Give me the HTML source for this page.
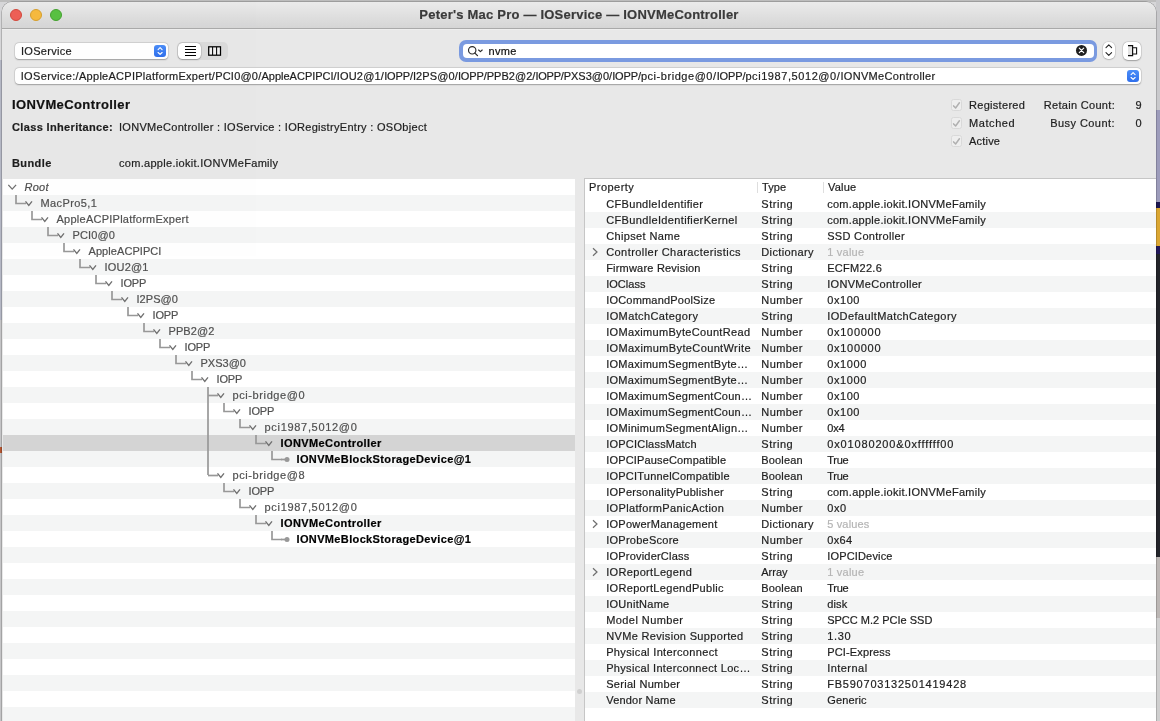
<!DOCTYPE html>
<html lang="en"><head><meta charset="utf-8"><title>IORegistryExplorer</title>
<style>
html,body{margin:0;padding:0}
body{width:1160px;height:721px;overflow:hidden;position:relative;background:#d6d6d8;
 font-family:"Liberation Sans",sans-serif;font-size:11px;color:#1e1e1e;letter-spacing:.3px;-webkit-text-stroke:.2px;-webkit-font-smoothing:antialiased}
.bg{position:absolute}
.win{opacity:.999;will-change:opacity;position:absolute;left:2px;top:2px;width:1154px;height:730px;background:#e8e8e8;border-radius:10px 10px 0 0;
 box-shadow:0 0 0 0.5px rgba(0,0,0,.35);overflow:hidden}
.tbar{position:absolute;left:0;top:0;width:100%;height:26px;background:linear-gradient(#ebebeb,#d5d5d5);border-bottom:1px solid #a9a9a9;box-shadow:0 1px 0 #eeeeee}
.tl{position:absolute;top:7px;width:12px;height:12px;border-radius:50%;box-sizing:border-box}
.tl.r{left:8px;background:#ee5f56;border:.5px solid #d1483c}
.tl.y{left:28px;background:#f6b93e;border:.5px solid #d69e2e}
.tl.g{left:48px;background:#58c042;border:.5px solid #44a02f}
.title{position:absolute;left:0;top:5px;width:100%;text-align:center;font-weight:bold;font-size:13px;color:#3a3a3a;letter-spacing:.215px}
.abs{position:absolute}
.field{position:absolute;background:#fff;border-radius:4px;box-shadow:0 0 0 .5px rgba(0,0,0,.12),0 .5px 1.5px rgba(0,0,0,.28);box-sizing:border-box}
.blue{position:absolute;width:12px;height:12px;border-radius:3px;background:linear-gradient(#4b8df8,#2f6fec)}
.lbl{position:absolute;white-space:nowrap}
.b{font-weight:bold}
/* tree */
.tree{position:absolute;left:1px;top:177px;width:572px;height:560px;background:#fff;overflow:hidden}
.tr{position:relative;height:16px;width:100%}
.tr.alt{background:#f4f5f5}
.tr.sel{background:#d4d4d4}
.t{position:absolute;top:0;line-height:16px;font-size:11px;color:#505050;white-space:nowrap}
.t.it{font-style:italic}
.t.bd{font-weight:bold;color:#000}
.conn{position:absolute;left:0;top:0}
.grip{position:absolute;left:574.5px;top:686.5px;width:5px;height:5px;border-radius:50%;background:#d0d0d0}
/* props */
.props{position:absolute;left:582px;top:176px;width:573px;height:560px;background:#fff;border:1px solid #c6c6c6;border-right:none;overflow:hidden;box-sizing:content-box}
.ph{position:relative;height:17px;line-height:17px}
.ph span{position:absolute;top:0;color:#1e1e1e}
.ph .h1{left:4px}.ph .h2{left:177px}.ph .h3{left:243px}
.ph .sep{position:absolute;top:3px;width:1px;height:11px;background:#dedede}
.pr{position:relative;height:16px;line-height:16px;white-space:nowrap}
.pr.alt{background:#f4f5f5}
.pr span{position:absolute;top:0}
.c1{left:21.2px}.c2{left:176.3px}.c3{left:242.2px}
.dim{color:#b5b5b5}
.dz{position:absolute;left:5.5px;top:3px}

</style></head>
<body>
<div class="bg" style="left:0;top:0;width:1160px;height:2px;background:#bdbdbd"></div>
<div class="bg" style="left:1156px;top:0;width:4px;height:721px;background:#c9c9cc"></div>
<div class="bg" style="left:1156px;top:110px;width:4px;height:92px;background:#9d9cbb"></div>
<div class="bg" style="left:1156px;top:202px;width:4px;height:6px;background:#1c1650"></div>
<div class="bg" style="left:1156px;top:208px;width:4px;height:38px;background:#dba733"></div>
<div class="bg" style="left:1156px;top:246px;width:4px;height:8px;background:#22185a"></div>
<div class="bg" style="left:1156px;top:254px;width:4px;height:303px;background:#23242a"></div>
<div class="bg" style="left:1156px;top:557px;width:4px;height:61px;background:#bcb7b5"></div>
<div class="bg" style="left:1156px;top:618px;width:4px;height:103px;background:#cfcfcf"></div>
<div class="bg" style="left:0;top:60px;width:2px;height:260px;background:#b4b7c4"></div>
<div class="bg" style="left:0;top:320px;width:2px;height:401px;background:#c4c4c6"></div>
<div class="bg" style="left:0;top:447px;width:2px;height:6px;background:#b5552f"></div>
<div class="win">
<div class="tbar">
 <i class="tl r"></i><i class="tl y"></i><i class="tl g"></i>
 <div class="title">Peter's Mac Pro — IOService — IONVMeController</div>
</div>
<!-- toolbar -->
<div class="field" style="left:13px;top:41px;width:153px;height:16px"></div>
<span class="lbl" style="left:19px;top:42px;line-height:15px">IOService</span>
<div class="blue" style="left:152px;top:43px"><svg width="12" height="12" viewBox="0 0 12 12"><path d="M4.1 4.6 L6.1 2.7 L8.1 4.6 M4.1 7.5 L6.1 9.4 L8.1 7.5" fill="none" stroke="#fff" stroke-width="1.15" stroke-linecap="round" stroke-linejoin="round"/></svg></div>
<!-- segmented -->
<div class="abs" style="left:175px;top:40px;width:51px;height:18px;border-radius:5px;background:#dbdbdb"></div>
<div class="field" style="left:176px;top:41px;width:23.3px;height:16px;border-radius:4.5px"></div>
<svg class="abs" style="left:175px;top:40px" width="51" height="18" viewBox="0 0 51 18">
 <path d="M8 4.5 H19 M8 7.5 H19 M8 10.5 H19 M8 13.5 H19" stroke="#000" stroke-width="1.2" fill="none"/>
 <rect x="31.7" y="4.8" width="11.8" height="8.4" fill="#f2f2f2" stroke="#000" stroke-width="1.25"/>
 <path d="M35.6 5 V13 M39.6 5 V13" stroke="#000" stroke-width="1.05"/>
</svg>
<!-- search -->
<div class="abs" style="left:457px;top:38px;width:638px;height:22px;border-radius:7px;background:#7a9ae0"></div>
<div class="abs" style="left:460.5px;top:41.5px;width:631px;height:14.4px;border-radius:4px;background:#fff"></div>
<svg class="abs" style="left:464px;top:42px" width="20" height="14" viewBox="0 0 20 14">
 <circle cx="6.2" cy="6.3" r="3.7" fill="none" stroke="#2a2a2a" stroke-width="1.15"/>
 <path d="M8.9 9.1 L11.5 11.6" stroke="#2a2a2a" stroke-width="1.3" stroke-linecap="round"/>
 <path d="M12.6 6.0 L14.4 7.7 L16.2 6.0" fill="none" stroke="#2a2a2a" stroke-width="1.15" stroke-linecap="round" stroke-linejoin="round"/>
</svg>
<span class="lbl" style="left:486.5px;top:41.8px;line-height:15px;letter-spacing:.33px;color:#111">nvme</span>
<svg class="abs" style="left:1073px;top:42px" width="13" height="13" viewBox="0 0 13 13">
 <circle cx="6.5" cy="6.4" r="5.5" fill="#1f1f1f"/>
 <path d="M4.3 4.2 L8.7 8.6 M8.7 4.2 L4.3 8.6" stroke="#fff" stroke-width="1.2" stroke-linecap="round"/>
</svg>
<!-- stepper -->
<div class="field" style="left:1101px;top:40px;width:11.5px;height:16.5px;border-radius:5px"></div>
<svg class="abs" style="left:1101px;top:40px" width="12" height="17" viewBox="0 0 12 17">
 <path d="M3 5.6 L5.8 2.9 L8.6 5.6 M3 10.6 L5.8 13.3 L8.6 10.6" fill="none" stroke="#222" stroke-width="1.1" stroke-linecap="round" stroke-linejoin="round"/>
</svg>
<!-- panel button -->
<div class="field" style="left:1121px;top:40px;width:18px;height:18px;border-radius:5px"></div>
<svg class="abs" style="left:1121px;top:40px" width="18" height="18" viewBox="0 0 18 18">
 <rect x="5" y="3.6" width="4.4" height="10" fill="#e4e4e4"/>
 <path d="M5 3.6 H9.6 V13.7 H5" fill="none" stroke="#111" stroke-width="1.2"/>
 <path d="M9.6 5.7 H13.6 V12 H9.6" fill="none" stroke="#111" stroke-width="1.1"/>
</svg>
<!-- path -->
<div class="field" style="left:13px;top:66px;width:1126px;height:16px"></div>
<div class="lbl" style="left:0;top:66px;line-height:16px;letter-spacing:0"><span style="position:absolute;left:18.65px;letter-spacing:0.359px">IOService:/</span><span style="position:absolute;left:77.00px;letter-spacing:0.272px">AppleACPIPlatformExpert/</span><span style="position:absolute;left:213.15px;letter-spacing:0.222px">PCI0@0/</span><span style="position:absolute;left:259.50px;letter-spacing:-0.004px">AppleACPIPCI/</span><span style="position:absolute;left:334.65px;letter-spacing:0.212px">IOU2@1/</span><span style="position:absolute;left:382.15px;letter-spacing:-0.119px">IOPP/</span><span style="position:absolute;left:410.90px;letter-spacing:0.114px">I2PS@0/</span><span style="position:absolute;left:455.90px;letter-spacing:-0.119px">IOPP/</span><span style="position:absolute;left:484.65px;letter-spacing:0.040px">PPB2@2/</span><span style="position:absolute;left:533.40px;letter-spacing:-0.219px">IOPP/</span><span style="position:absolute;left:561.65px;letter-spacing:0.004px">PXS3@0/</span><span style="position:absolute;left:610.15px;letter-spacing:-0.119px">IOPP/</span><span style="position:absolute;left:638.90px;letter-spacing:0.546px">pci-bridge@0/</span><span style="position:absolute;left:714.65px;letter-spacing:-0.119px">IOPP/</span><span style="position:absolute;left:743.40px;letter-spacing:0.573px">pci1987,5012@0/</span><span style="position:absolute;left:838.40px;letter-spacing:0.324px">IONVMeController</span></div>
<div class="blue" style="left:1125px;top:68px"><svg width="12" height="12" viewBox="0 0 12 12"><path d="M4.1 4.6 L6.1 2.7 L8.1 4.6 M4.1 7.5 L6.1 9.4 L8.1 7.5" fill="none" stroke="#fff" stroke-width="1.15" stroke-linecap="round" stroke-linejoin="round"/></svg></div>
<!-- info -->
<span class="lbl b" style="left:10px;top:95.2px;font-size:13px;line-height:16px;color:#111;letter-spacing:.4px">IONVMeController</span>
<span class="lbl b" style="left:10px;top:118px;line-height:14px;letter-spacing:.35px">Class Inheritance:</span>
<span class="lbl" style="left:117px;top:118px;line-height:14px">IONVMeController : IOService : IORegistryEntry : OSObject</span>
<span class="lbl b" style="left:10px;top:154px;line-height:14px;letter-spacing:.4px">Bundle</span>
<span class="lbl" style="left:117px;top:154px;line-height:14px">com.apple.iokit.IONVMeFamily</span>
<!-- checks -->
<div class="abs" style="left:949px;top:97px;width:10.6px;height:11.6px;box-sizing:border-box;border:1px solid #d9d9d9;border-radius:2.5px;background:#eeeeee"></div>
<svg class="abs" style="left:949px;top:97.7px" width="11" height="11" viewBox="0 0 11 11"><path d="M2.6 5.9 L4.6 8 L8.4 2.8" fill="none" stroke="#b0b0b0" stroke-width="1.5" stroke-linecap="round" stroke-linejoin="round"/></svg>
<span class="lbl" style="left:967px;top:96px;line-height:14px">Registered</span>
<div class="abs" style="left:949px;top:115px;width:10.6px;height:11.6px;box-sizing:border-box;border:1px solid #d9d9d9;border-radius:2.5px;background:#eeeeee"></div>
<svg class="abs" style="left:949px;top:115.7px" width="11" height="11" viewBox="0 0 11 11"><path d="M2.6 5.9 L4.6 8 L8.4 2.8" fill="none" stroke="#b0b0b0" stroke-width="1.5" stroke-linecap="round" stroke-linejoin="round"/></svg>
<span class="lbl" style="left:967px;top:114px;line-height:14px;letter-spacing:.58px">Matched</span>
<div class="abs" style="left:949px;top:133px;width:10.6px;height:11.6px;box-sizing:border-box;border:1px solid #d9d9d9;border-radius:2.5px;background:#eeeeee"></div>
<svg class="abs" style="left:949px;top:133.7px" width="11" height="11" viewBox="0 0 11 11"><path d="M2.6 5.9 L4.6 8 L8.4 2.8" fill="none" stroke="#b0b0b0" stroke-width="1.5" stroke-linecap="round" stroke-linejoin="round"/></svg>
<span class="lbl" style="left:967px;top:132px;line-height:14px;letter-spacing:.2px">Active</span>
<span class="lbl" style="right:41px;top:96px;line-height:14px">Retain Count:</span>
<span class="lbl" style="right:14px;top:96px;line-height:14px">9</span>
<span class="lbl" style="right:41px;top:114px;line-height:14px;letter-spacing:.45px">Busy Count:</span>
<span class="lbl" style="right:14px;top:114px;line-height:14px">0</span>
<div class="tree">
<div class="tr"><span class="t it" style="left:21.5px;letter-spacing:0.25px">Root</span></div>
<div class="tr alt"><span class="t" style="left:37.5px;letter-spacing:0.406px">MacPro5,1</span></div>
<div class="tr"><span class="t" style="left:53.5px;letter-spacing:0.25px">AppleACPIPlatformExpert</span></div>
<div class="tr alt"><span class="t" style="left:69.5px;letter-spacing:0.15px">PCI0@0</span></div>
<div class="tr"><span class="t" style="left:85.5px;letter-spacing:0.068px">AppleACPIPCI</span></div>
<div class="tr alt"><span class="t" style="left:101.5px;letter-spacing:0.2px">IOU2@1</span></div>
<div class="tr"><span class="t" style="left:117.5px;letter-spacing:-0.167px">IOPP</span></div>
<div class="tr alt"><span class="t" style="left:133.5px;letter-spacing:0.05px">I2PS@0</span></div>
<div class="tr"><span class="t" style="left:149.5px;letter-spacing:-0.167px">IOPP</span></div>
<div class="tr alt"><span class="t" style="left:165.5px;letter-spacing:0.1px">PPB2@2</span></div>
<div class="tr"><span class="t" style="left:181.5px;letter-spacing:-0.167px">IOPP</span></div>
<div class="tr alt"><span class="t" style="left:197.5px;letter-spacing:0.0px">PXS3@0</span></div>
<div class="tr"><span class="t" style="left:213.5px;letter-spacing:-0.167px">IOPP</span></div>
<div class="tr alt"><span class="t" style="left:229.5px;letter-spacing:0.6px">pci-bridge@0</span></div>
<div class="tr"><span class="t" style="left:245.5px;letter-spacing:-0.167px">IOPP</span></div>
<div class="tr alt"><span class="t" style="left:261.5px;letter-spacing:0.692px">pci1987,5012@0</span></div>
<div class="tr sel"><span class="t bd" style="left:277.5px;letter-spacing:0.4px">IONVMeController</span></div>
<div class="tr alt"><span class="t bd" style="left:293.5px;letter-spacing:0.36px">IONVMeBlockStorageDevice@1</span></div>
<div class="tr"><span class="t" style="left:229.5px;letter-spacing:0.6px">pci-bridge@8</span></div>
<div class="tr alt"><span class="t" style="left:245.5px;letter-spacing:-0.167px">IOPP</span></div>
<div class="tr"><span class="t" style="left:261.5px;letter-spacing:0.692px">pci1987,5012@0</span></div>
<div class="tr alt"><span class="t bd" style="left:277.5px;letter-spacing:0.4px">IONVMeController</span></div>
<div class="tr"><span class="t bd" style="left:293.5px;letter-spacing:0.36px">IONVMeBlockStorageDevice@1</span></div>
<div class="tr alt"></div>
<div class="tr"></div>
<div class="tr alt"></div>
<div class="tr"></div>
<div class="tr alt"></div>
<div class="tr"></div>
<div class="tr alt"></div>
<div class="tr"></div>
<div class="tr alt"></div>
<div class="tr"></div>
<div class="tr alt"></div>
<svg class="conn" width="573" height="542" viewBox="0 0 573 542">
<path d="M5.3 5.9 L9.2 10.1 L13.1 5.9" fill="none" stroke="#707070" stroke-width="1.35"/>
<path d="M13 16 V24.5 H23" fill="none" stroke="#989898" stroke-width="1.7"/>
<path d="M22.5 22.4 L25.8 26.4 L29 22.4" fill="none" stroke="#707070" stroke-width="1.35"/>
<path d="M29 32 V40.5 H39" fill="none" stroke="#989898" stroke-width="1.7"/>
<path d="M38.5 38.4 L41.8 42.4 L45 38.4" fill="none" stroke="#707070" stroke-width="1.35"/>
<path d="M45 48 V56.5 H55" fill="none" stroke="#989898" stroke-width="1.7"/>
<path d="M54.5 54.4 L57.8 58.4 L61 54.4" fill="none" stroke="#707070" stroke-width="1.35"/>
<path d="M61 64 V72.5 H71" fill="none" stroke="#989898" stroke-width="1.7"/>
<path d="M70.5 70.4 L73.8 74.4 L77 70.4" fill="none" stroke="#707070" stroke-width="1.35"/>
<path d="M77 80 V88.5 H87" fill="none" stroke="#989898" stroke-width="1.7"/>
<path d="M86.5 86.4 L89.8 90.4 L93 86.4" fill="none" stroke="#707070" stroke-width="1.35"/>
<path d="M93 96 V104.5 H103" fill="none" stroke="#989898" stroke-width="1.7"/>
<path d="M102.5 102.4 L105.8 106.4 L109 102.4" fill="none" stroke="#707070" stroke-width="1.35"/>
<path d="M109 112 V120.5 H119" fill="none" stroke="#989898" stroke-width="1.7"/>
<path d="M118.5 118.4 L121.8 122.4 L125 118.4" fill="none" stroke="#707070" stroke-width="1.35"/>
<path d="M125 128 V136.5 H135" fill="none" stroke="#989898" stroke-width="1.7"/>
<path d="M134.5 134.4 L137.8 138.4 L141 134.4" fill="none" stroke="#707070" stroke-width="1.35"/>
<path d="M141 144 V152.5 H151" fill="none" stroke="#989898" stroke-width="1.7"/>
<path d="M150.5 150.4 L153.8 154.4 L157 150.4" fill="none" stroke="#707070" stroke-width="1.35"/>
<path d="M157 160 V168.5 H167" fill="none" stroke="#989898" stroke-width="1.7"/>
<path d="M166.5 166.4 L169.8 170.4 L173 166.4" fill="none" stroke="#707070" stroke-width="1.35"/>
<path d="M173 176 V184.5 H183" fill="none" stroke="#989898" stroke-width="1.7"/>
<path d="M182.5 182.4 L185.8 186.4 L189 182.4" fill="none" stroke="#707070" stroke-width="1.35"/>
<path d="M189 192 V200.5 H199" fill="none" stroke="#989898" stroke-width="1.7"/>
<path d="M198.5 198.4 L201.8 202.4 L205 198.4" fill="none" stroke="#707070" stroke-width="1.35"/>
<path d="M205 208 V296" fill="none" stroke="#989898" stroke-width="1.7"/>
<path d="M205 216.5 H215" fill="none" stroke="#989898" stroke-width="1.7"/>
<path d="M214.5 214.4 L217.8 218.4 L221 214.4" fill="none" stroke="#707070" stroke-width="1.35"/>
<path d="M221 224 V232.5 H231" fill="none" stroke="#989898" stroke-width="1.7"/>
<path d="M230.5 230.4 L233.8 234.4 L237 230.4" fill="none" stroke="#707070" stroke-width="1.35"/>
<path d="M237 240 V248.5 H247" fill="none" stroke="#989898" stroke-width="1.7"/>
<path d="M246.5 246.4 L249.8 250.4 L253 246.4" fill="none" stroke="#707070" stroke-width="1.35"/>
<path d="M253 256 V264.5 H263" fill="none" stroke="#989898" stroke-width="1.7"/>
<path d="M262.5 262.4 L265.8 266.4 L269 262.4" fill="none" stroke="#707070" stroke-width="1.35"/>
<path d="M269 272 V280.5 H279" fill="none" stroke="#989898" stroke-width="1.7"/>
<circle cx="284" cy="280.5" r="2.5" fill="#989898"/><path d="M278 280.5 H283" stroke="#989898" stroke-width="1.7"/>
<path d="M205 296.5 H215" fill="none" stroke="#989898" stroke-width="1.7"/>
<path d="M214.5 294.4 L217.8 298.4 L221 294.4" fill="none" stroke="#707070" stroke-width="1.35"/>
<path d="M221 304 V312.5 H231" fill="none" stroke="#989898" stroke-width="1.7"/>
<path d="M230.5 310.4 L233.8 314.4 L237 310.4" fill="none" stroke="#707070" stroke-width="1.35"/>
<path d="M237 320 V328.5 H247" fill="none" stroke="#989898" stroke-width="1.7"/>
<path d="M246.5 326.4 L249.8 330.4 L253 326.4" fill="none" stroke="#707070" stroke-width="1.35"/>
<path d="M253 336 V344.5 H263" fill="none" stroke="#989898" stroke-width="1.7"/>
<path d="M262.5 342.4 L265.8 346.4 L269 342.4" fill="none" stroke="#707070" stroke-width="1.35"/>
<path d="M269 352 V360.5 H279" fill="none" stroke="#989898" stroke-width="1.7"/>
<circle cx="284" cy="360.5" r="2.5" fill="#989898"/><path d="M278 360.5 H283" stroke="#989898" stroke-width="1.7"/>
</svg>
</div>
<div class="grip"></div>
<div class="props">
<div class="ph"><span class="h1" style="letter-spacing:.46px">Property</span><i class="sep" style="left:172px"></i><span class="h2" style="letter-spacing:.13px">Type</span><i class="sep" style="left:238px"></i><span class="h3" style="letter-spacing:.19px">Value</span></div>
<div class="pr"><span class="c1" style="letter-spacing:0.335px">CFBundleIdentifier</span><span class="c2" style="letter-spacing:0.54px">String</span><span class="c3" style="letter-spacing:0.278px">com.apple.iokit.IONVMeFamily</span></div>
<div class="pr alt"><span class="c1" style="letter-spacing:0.352px">CFBundleIdentifierKernel</span><span class="c2" style="letter-spacing:0.54px">String</span><span class="c3" style="letter-spacing:0.278px">com.apple.iokit.IONVMeFamily</span></div>
<div class="pr"><span class="c1" style="letter-spacing:0.355px">Chipset Name</span><span class="c2" style="letter-spacing:0.54px">String</span><span class="c3" style="letter-spacing:0.315px">SSD Controller</span></div>
<div class="pr alt"><svg class="dz" width="8" height="10" viewBox="0 0 8 10"><path d="M2 1.2 L6 5 L2 8.8" fill="none" stroke="#6e6e6e" stroke-width="1.2"/></svg><span class="c1" style="letter-spacing:0.436px">Controller Characteristics</span><span class="c2" style="letter-spacing:0.378px">Dictionary</span><span class="c3 dim" style="letter-spacing:0.233px">1 value</span></div>
<div class="pr"><span class="c1" style="letter-spacing:0.2px">Firmware Revision</span><span class="c2" style="letter-spacing:0.54px">String</span><span class="c3" style="letter-spacing:0.286px">ECFM22.6</span></div>
<div class="pr alt"><span class="c1" style="letter-spacing:0.017px">IOClass</span><span class="c2" style="letter-spacing:0.54px">String</span><span class="c3" style="letter-spacing:0.313px">IONVMeController</span></div>
<div class="pr"><span class="c1" style="letter-spacing:0.194px">IOCommandPoolSize</span><span class="c2" style="letter-spacing:0.4px">Number</span><span class="c3" style="letter-spacing:0.575px">0x100</span></div>
<div class="pr alt"><span class="c1" style="letter-spacing:0.393px">IOMatchCategory</span><span class="c2" style="letter-spacing:0.54px">String</span><span class="c3" style="letter-spacing:0.39px">IODefaultMatchCategory</span></div>
<div class="pr"><span class="c1" style="letter-spacing:0.329px">IOMaximumByteCountRead</span><span class="c2" style="letter-spacing:0.4px">Number</span><span class="c3" style="letter-spacing:0.714px">0x100000</span></div>
<div class="pr alt"><span class="c1" style="letter-spacing:0.373px">IOMaximumByteCountWrite</span><span class="c2" style="letter-spacing:0.4px">Number</span><span class="c3" style="letter-spacing:0.714px">0x100000</span></div>
<div class="pr"><span class="c1" style="letter-spacing:0.27px">IOMaximumSegmentByte…</span><span class="c2" style="letter-spacing:0.4px">Number</span><span class="c3" style="letter-spacing:0.64px">0x1000</span></div>
<div class="pr alt"><span class="c1" style="letter-spacing:0.27px">IOMaximumSegmentByte…</span><span class="c2" style="letter-spacing:0.4px">Number</span><span class="c3" style="letter-spacing:0.64px">0x1000</span></div>
<div class="pr"><span class="c1" style="letter-spacing:0.26px">IOMaximumSegmentCoun…</span><span class="c2" style="letter-spacing:0.4px">Number</span><span class="c3" style="letter-spacing:0.575px">0x100</span></div>
<div class="pr alt"><span class="c1" style="letter-spacing:0.26px">IOMaximumSegmentCoun…</span><span class="c2" style="letter-spacing:0.4px">Number</span><span class="c3" style="letter-spacing:0.575px">0x100</span></div>
<div class="pr"><span class="c1" style="letter-spacing:0.305px">IOMinimumSegmentAlign…</span><span class="c2" style="letter-spacing:0.4px">Number</span><span class="c3" style="letter-spacing:-0.1px">0x4</span></div>
<div class="pr alt"><span class="c1" style="letter-spacing:0.221px">IOPCIClassMatch</span><span class="c2" style="letter-spacing:0.54px">String</span><span class="c3" style="letter-spacing:0.855px">0x01080200&amp;0xffffff00</span></div>
<div class="pr"><span class="c1" style="letter-spacing:0.163px">IOPCIPauseCompatible</span><span class="c2" style="letter-spacing:0.167px">Boolean</span><span class="c3" style="letter-spacing:-0.267px">True</span></div>
<div class="pr alt"><span class="c1" style="letter-spacing:0.225px">IOPCITunnelCompatible</span><span class="c2" style="letter-spacing:0.167px">Boolean</span><span class="c3" style="letter-spacing:-0.267px">True</span></div>
<div class="pr"><span class="c1" style="letter-spacing:0.271px">IOPersonalityPublisher</span><span class="c2" style="letter-spacing:0.54px">String</span><span class="c3" style="letter-spacing:0.278px">com.apple.iokit.IONVMeFamily</span></div>
<div class="pr alt"><span class="c1" style="letter-spacing:0.35px">IOPlatformPanicAction</span><span class="c2" style="letter-spacing:0.4px">Number</span><span class="c3" style="letter-spacing:0.6px">0x0</span></div>
<div class="pr"><svg class="dz" width="8" height="10" viewBox="0 0 8 10"><path d="M2 1.2 L6 5 L2 8.8" fill="none" stroke="#6e6e6e" stroke-width="1.2"/></svg><span class="c1" style="letter-spacing:0.256px">IOPowerManagement</span><span class="c2" style="letter-spacing:0.378px">Dictionary</span><span class="c3 dim" style="letter-spacing:0.171px">5 values</span></div>
<div class="pr alt"><span class="c1" style="letter-spacing:0.255px">IOProbeScore</span><span class="c2" style="letter-spacing:0.4px">Number</span><span class="c3" style="letter-spacing:0.367px">0x64</span></div>
<div class="pr"><span class="c1" style="letter-spacing:0.207px">IOProviderClass</span><span class="c2" style="letter-spacing:0.54px">String</span><span class="c3" style="letter-spacing:0.17px">IOPCIDevice</span></div>
<div class="pr alt"><svg class="dz" width="8" height="10" viewBox="0 0 8 10"><path d="M2 1.2 L6 5 L2 8.8" fill="none" stroke="#6e6e6e" stroke-width="1.2"/></svg><span class="c1" style="letter-spacing:0.331px">IOReportLegend</span><span class="c2" style="letter-spacing:-0.025px">Array</span><span class="c3 dim" style="letter-spacing:0.233px">1 value</span></div>
<div class="pr"><span class="c1" style="letter-spacing:0.316px">IOReportLegendPublic</span><span class="c2" style="letter-spacing:0.167px">Boolean</span><span class="c3" style="letter-spacing:-0.267px">True</span></div>
<div class="pr alt"><span class="c1" style="letter-spacing:0.278px">IOUnitName</span><span class="c2" style="letter-spacing:0.54px">String</span><span class="c3" style="letter-spacing:0.167px">disk</span></div>
<div class="pr"><span class="c1" style="letter-spacing:0.427px">Model Number</span><span class="c2" style="letter-spacing:0.54px">String</span><span class="c3" style="letter-spacing:0.0px">SPCC M.2 PCIe SSD</span></div>
<div class="pr alt"><span class="c1" style="letter-spacing:0.332px">NVMe Revision Supported</span><span class="c2" style="letter-spacing:0.54px">String</span><span class="c3" style="letter-spacing:0.667px">1.30</span></div>
<div class="pr"><span class="c1" style="letter-spacing:0.34px">Physical Interconnect</span><span class="c2" style="letter-spacing:0.54px">String</span><span class="c3" style="letter-spacing:0.16px">PCI-Express</span></div>
<div class="pr alt"><span class="c1" style="letter-spacing:0.316px">Physical Interconnect Loc…</span><span class="c2" style="letter-spacing:0.54px">String</span><span class="c3" style="letter-spacing:0.457px">Internal</span></div>
<div class="pr"><span class="c1" style="letter-spacing:0.292px">Serial Number</span><span class="c2" style="letter-spacing:0.54px">String</span><span class="c3" style="letter-spacing:0.779px">FB590703132501419428</span></div>
<div class="pr alt"><span class="c1" style="letter-spacing:0.21px">Vendor Name</span><span class="c2" style="letter-spacing:0.54px">String</span><span class="c3" style="letter-spacing:0.15px">Generic</span></div>
<div class="pr"></div>
</div>
</div>
</body></html>
